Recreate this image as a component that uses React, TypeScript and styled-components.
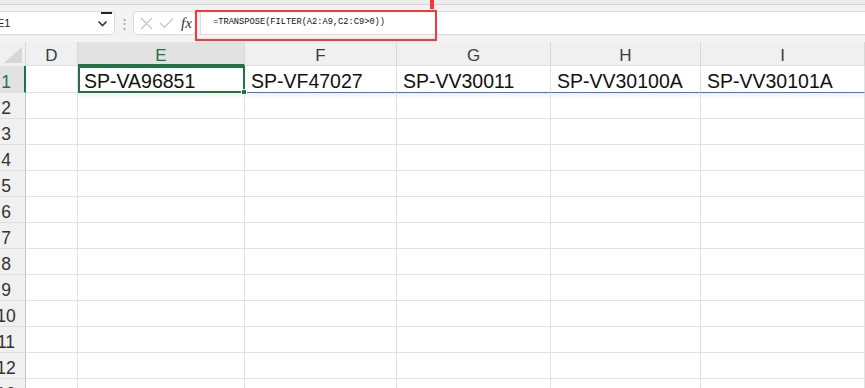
import styled, { createGlobalStyle } from 'styled-components'

const GlobalStyle = createGlobalStyle`
  html, body {
    margin: 0;
    padding: 0;
    overflow: hidden;
    background: #f3f3f3;
    font-family: 'Liberation Sans', Arial, sans-serif;
  }
`

const columns = ['D', 'E', 'F', 'G', 'H', 'I']
const widths = [52, 167, 152, 154, 150]
const rowOne: Record<string, string> = {
  E: 'SP-VA96851',
  F: 'SP-VF47027',
  G: 'SP-VV30011',
  H: 'SP-VV30100A',
  I: 'SP-VV30101A',
}
const rowCount = 13

function Chevron() {
  return (
    <svg width="11" height="7" viewBox="0 0 11 7">
      <path d="M1.5 1.5 L5.5 5.5 L9.5 1.5" fill="none" stroke="#333" strokeWidth="1.6" />
    </svg>
  )
}

function CancelIcon() {
  return (
    <svg width="13" height="13" viewBox="0 0 13 13">
      <path d="M1 1 L12 12 M12 1 L1 12" stroke="#c4c4c4" strokeWidth="1.1" />
    </svg>
  )
}

function CheckIcon() {
  return (
    <svg width="15" height="12" viewBox="0 0 15 12">
      <path d="M1 6 L5.5 10.5 L14 1.5" fill="none" stroke="#c4c4c4" strokeWidth="1.1" />
    </svg>
  )
}

function CornerMark() {
  return (
    <svg width="18" height="16" viewBox="0 0 18 16">
      <polygon points="18,0 18,16 0,16" fill="#d6d6d6" />
    </svg>
  )
}

export default function App() {
  const rows = Array.from({ length: rowCount }, (_, i) => i + 1)

  return (
    <Page>
      <GlobalStyle />
      <TopStrip />
      <FormulaBar>
        <NameBox>
          <span>E1</span>
          <CursorMark />
          <Chevron />
        </NameBox>
        <Dots>⋮</Dots>
        <FxBox>
          <CancelIcon />
          <CheckIcon />
          <Fx>fx</Fx>
        </FxBox>
        <FormulaInput>=TRANSPOSE(FILTER(A2:A9,C2:C9&gt;0))</FormulaInput>
        <Highlight />
        <HighlightStem />
      </FormulaBar>

      <Sheet $widths={widths}>
        <Corner>
          <CornerMark />
        </Corner>
        {columns.map((c) => (
          <ColHeader key={c} $active={c === 'E'}>
            {c}
          </ColHeader>
        ))}

        {rows.map((r) => (
          <Row key={r} r={r} />
        ))}
      </Sheet>
    </Page>
  )
}

function Row({ r }: { r: number }) {
  return (
    <>
      <RowHeader $active={r === 1}>
        <span>{r}</span>
      </RowHeader>
      {columns.map((c) => {
        const value = r === 1 ? rowOne[c] : undefined
        return (
          <Cell
            key={c}
            $selected={r === 1 && c === 'E'}
            $spill={r === 1 && c !== 'D' && c !== 'E'}
            $shadow={r === 2 && c !== 'D'}
          >
            {value}
            {r === 1 && c === 'E' && <Handle />}
          </Cell>
        )
      })}
    </>
  )
}

const Page = styled.div`
  width: 865px;
  height: 388px;
  overflow: hidden;
  background: #f3f3f3;
`

const TopStrip = styled.div`
  height: 4px;
  background: #ececec;
  border-bottom: 1px solid #d4d4d4;
`

const FormulaBar = styled.div`
  position: relative;
  height: 37px;
  box-sizing: border-box;
  padding-top: 6px;
  display: flex;
  align-items: flex-start;
`

const NameBox = styled.div`
  position: relative;
  margin-left: -12px;
  width: 127px;
  height: 24px;
  box-sizing: border-box;
  background: #fff;
  border: 1px solid #dcdcdc;
  border-radius: 0 4px 4px 0;
  display: flex;
  align-items: center;
  justify-content: space-between;
  padding: 0 6px 0 8px;
  font-size: 11px;
  color: #222;
`

const CursorMark = styled.div`
  position: absolute;
  right: 2px;
  top: 0;
  width: 11px;
  height: 1.5px;
  background: #222;
`

const Dots = styled.div`
  width: 18px;
  height: 24px;
  display: flex;
  align-items: center;
  justify-content: center;
  color: #9a9a9a;
  font-size: 13px;
`

const FxBox = styled.div`
  width: 63px;
  height: 24px;
  box-sizing: border-box;
  background: #fff;
  border: 1px solid #dcdcdc;
  border-radius: 4px;
  display: flex;
  align-items: center;
  gap: 6px;
  padding-left: 6px;
`

const Fx = styled.span`
  font-family: 'Liberation Serif', 'Times New Roman', serif;
  font-style: italic;
  font-size: 15px;
  color: #333;
  margin-left: 1px;
`

const FormulaInput = styled.div`
  flex: 1;
  margin-left: 4px;
  height: 24px;
  box-sizing: border-box;
  background: #fff;
  border: 1px solid #dcdcdc;
  border-right: none;
  padding-left: 12px;
  display: flex;
  align-items: center;
  font-family: 'Liberation Mono', 'Courier New', monospace;
  font-size: 8.7px;
  color: #111;
  padding-bottom: 3px;
`

const Highlight = styled.div`
  position: absolute;
  left: 195px;
  top: 5px;
  width: 242px;
  height: 31px;
  box-sizing: border-box;
  border: 2px solid #ff3434;
`

const HighlightStem = styled.div`
  position: absolute;
  left: 430px;
  top: -5px;
  width: 4px;
  height: 9px;
  background: #ff3434;
`

const Sheet = styled.div<{ $widths: number[] }>`
  display: grid;
  grid-template-columns: 26px ${(p) => p.$widths.map((w) => `${w}px`).join(' ')} 1fr;
  grid-template-rows: 24px 27px;
  grid-auto-rows: 26px;
`

const Corner = styled.div`
  background: #f0f0f0;
  border-right: 1px solid #d8d8d8;
  display: flex;
  align-items: flex-end;
  justify-content: flex-end;
  padding: 0 3px 3px 0;
`

const ColHeader = styled.div<{ $active?: boolean }>`
  box-sizing: border-box;
  background: ${(p) => (p.$active ? '#e2e2e2' : '#f0f0f0')};
  border-right: 1px solid #d8d8d8;
  border-bottom: ${(p) => (p.$active ? '2px solid #217346' : '1px solid #e0e0e0')};
  color: ${(p) => (p.$active ? '#217346' : '#3c3c3c')};
  font-size: 17px;
  display: flex;
  align-items: center;
  justify-content: center;
  padding-top: 5px;
`

const RowHeader = styled.div<{ $active?: boolean }>`
  box-sizing: border-box;
  background: ${(p) => (p.$active ? '#e2e2e2' : '#f0f0f0')};
  border-right: ${(p) => (p.$active ? '2px solid #217346' : '1px solid #c8c8c8')};
  border-bottom: 1px solid #dedede;
  color: ${(p) => (p.$active ? '#217346' : '#333')};
  font-size: 17.5px;
  overflow: hidden;
  display: flex;
  align-items: center;
  padding-top: 6px;

  span {
    width: 12px;
    display: flex;
    justify-content: center;
    white-space: nowrap;
  }
`

const Cell = styled.div<{ $selected?: boolean; $spill?: boolean; $shadow?: boolean }>`
  position: relative;
  box-sizing: border-box;
  background: #fff;
  border-right: 1px solid #e1e1e1;
  border-bottom: 1px solid ${(p) => (p.$spill ? '#4a78c8' : '#e1e1e1')};
  ${(p) =>
    p.$selected &&
    `
    border: 2px solid #217346;
    z-index: 2;
  `}
  ${(p) =>
    p.$shadow &&
    `
    background: linear-gradient(to bottom, rgba(0, 0, 0, 0.06), rgba(0, 0, 0, 0) 6px), #fff;
  `}
  padding-left: ${(p) => (p.$selected ? '4px' : '6px')};
  padding-top: 4px;
  display: flex;
  align-items: center;
  font-size: 19.5px;
  color: #111;
  white-space: nowrap;
`

const Handle = styled.div`
  position: absolute;
  right: -4px;
  bottom: -4px;
  width: 6px;
  height: 6px;
  background: #217346;
  border: 1px solid #fff;
  box-sizing: border-box;
`
